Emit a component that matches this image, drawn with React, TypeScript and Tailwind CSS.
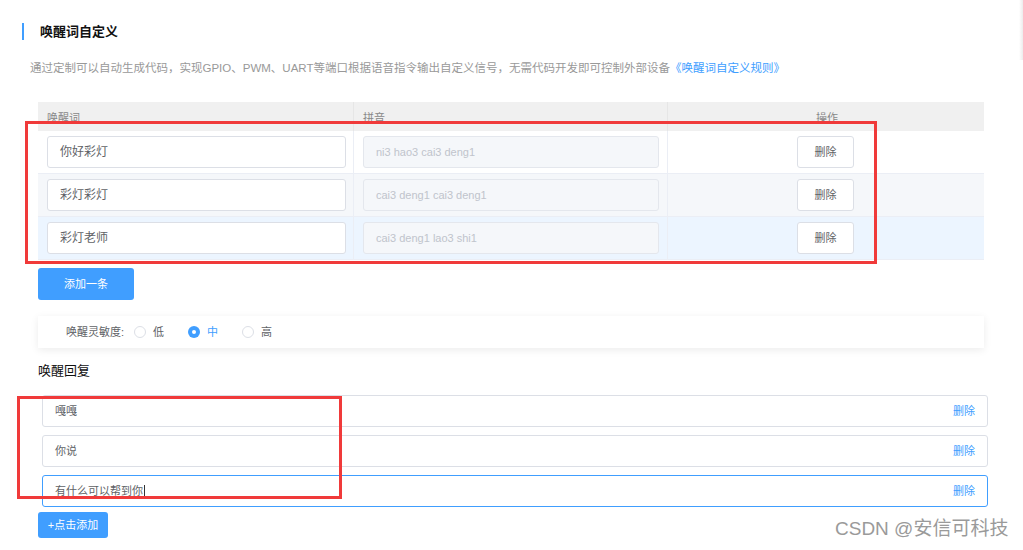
import { useState } from "react";

const wakeWords = [
  { word: "你好彩灯", pinyin: "ni3 hao3 cai3 deng1", bg: "bg-white" },
  { word: "彩灯彩灯", pinyin: "cai3 deng1 cai3 deng1", bg: "bg-[#f5f7fa]" },
  { word: "彩灯老师", pinyin: "cai3 deng1 lao3 shi1", bg: "bg-[#ecf5ff]" },
];

const replies = ["嘎嘎", "你说", "有什么可以帮到你"];

export default function App() {
  const [level, setLevel] = useState("中");

  return (
    <div className="relative h-[550px] w-[1023px] overflow-hidden bg-white font-['Liberation_Sans','Noto_Sans_CJK_SC',sans-serif] text-[#606266]">
      {/* right edge shadow */}
      <div className="absolute right-0 top-0 h-[60px] w-[4px] bg-gradient-to-r from-transparent to-[#ececec]" />

      {/* Title */}
      <div className="flex items-center pl-[22px] pt-[23px]">
        <div className="h-[17px] w-[2px] bg-[#409eff]" />
        <h2 className="ml-[16px] text-[13px] font-bold leading-[17px] text-[#111]">
          唤醒词自定义
        </h2>
      </div>

      <p className="ml-[30px] mt-[20px] text-[11.5px] leading-[16px] text-[#999]">
        通过定制可以自动生成代码，实现GPIO、PWM、UART等端口根据语音指令输出自定义信号，无需代码开发即可控制外部设备
        <span className="text-[#409eff]">《唤醒词自定义规则》</span>
      </p>

      {/* Table */}
      <div className="ml-[38px] mt-[26px] w-[946px] text-[11px]">
        <div className="flex h-[29px] bg-[#f0f0f0] text-[#888]">
          <div className="w-[316px] border-r border-[#e6e6e6] pl-[9px] pt-[8px]">唤醒词</div>
          <div className="w-[314px] border-r border-[#e6e6e6] pl-[9px] pt-[8px]">拼音</div>
          <div className="flex-1 pt-[8px] pl-[148px]">操作</div>
        </div>
        {wakeWords.map((r) => (
          <div key={r.word} className={`flex h-[43px] border-b border-[#ebeef5] ${r.bg}`}>
            <div className="flex w-[316px] items-center border-r border-[#ebeef5] pl-[9px]">
              <div className="flex h-[32px] w-[299px] items-center rounded-[3px] border border-[#dcdfe6] bg-white pl-[12px] text-[12px] text-[#606266]">
                {r.word}
              </div>
            </div>
            <div className="flex w-[314px] items-center border-r border-[#ebeef5] pl-[9px]">
              <div className="flex h-[32px] w-[296px] items-center rounded-[3px] border border-[#e4e7ed] bg-[#f5f7fa] pl-[12px] text-[11px] text-[#c0c4cc]">
                {r.pinyin}
              </div>
            </div>
            <div className="flex flex-1 items-center pl-[129px]">
              <button className="h-[32px] w-[57px] rounded-[3px] border border-[#dcdfe6] bg-white text-[11px] text-[#606266]">
                删除
              </button>
            </div>
          </div>
        ))}
      </div>

      <button className="ml-[38px] mt-[8px] h-[32px] w-[96px] rounded-[3px] bg-[#409eff] text-[11px] text-white">
        添加一条
      </button>

      {/* Sensitivity */}
      <div className="ml-[38px] mt-[16px] flex h-[32px] w-[946px] items-center pl-[28px] text-[11px] shadow-[0_2px_8px_rgba(0,0,0,0.08)]">
        <span className="text-[#606266]">唤醒灵敏度:</span>
        {["低", "中", "高"].map((l) => (
          <label
            key={l}
            onClick={() => setLevel(l)}
            className={`flex items-center ${l === "低" ? "ml-[10px]" : "ml-[24px]"}`}
          >
            {level === l ? (
              <span className="flex h-[12px] w-[12px] items-center justify-center rounded-full bg-[#409eff]">
                <span className="h-[4px] w-[4px] rounded-full bg-white" />
              </span>
            ) : (
              <span className="h-[12px] w-[12px] rounded-full border border-[#dcdfe6] bg-white" />
            )}
            <span className={`ml-[7px] ${level === l ? "text-[#409eff]" : "text-[#606266]"}`}>{l}</span>
          </label>
        ))}
      </div>

      <h3 className="ml-[38px] mt-[15px] text-[13px] leading-[16px] text-[#111]">唤醒回复</h3>

      {/* Replies */}
      <div className="ml-[42px] mt-[16px] flex w-[946px] flex-col gap-[8px]">
        {replies.map((r, i) => (
          <div
            key={r}
            className={`flex h-[32px] items-center justify-between rounded-[3px] border pl-[12px] pr-[12px] text-[11px] ${
              i === 2 ? "border-[#409eff]" : "border-[#dcdfe6]"
            }`}
          >
            <span className="text-[#606266]">
              {r}
              {i === 2 && <span className="ml-[1px] inline-block h-[12px] w-px translate-y-[2px] bg-[#333]" />}
            </span>
            <span className="text-[#409eff]">删除</span>
          </div>
        ))}
      </div>

      <button className="ml-[38px] mt-[5px] h-[26px] w-[70px] rounded-[3px] bg-[#409eff] text-[11px] text-white">
        +点击添加
      </button>

      {/* annotation boxes */}
      <div className="pointer-events-none absolute left-[25px] top-[121px] h-[143px] w-[852px] border-[3px] border-[#f03a3a]" />
      <div className="pointer-events-none absolute left-[17px] top-[396px] h-[103px] w-[325px] border-[3px] border-[#f03a3a]" />

      {/* watermark */}
      <div className="absolute left-[835px] top-[517px] text-[19px] leading-[24px] text-[#9a9a9a]">CSDN @安信可科技</div>
    </div>
  );
}
